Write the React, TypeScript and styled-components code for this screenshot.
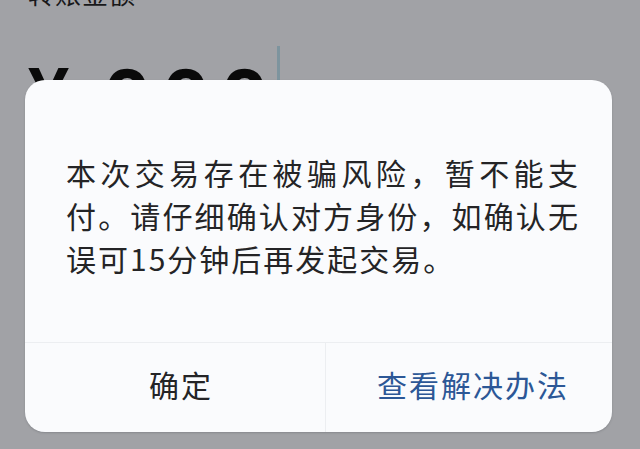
import styled, { createGlobalStyle } from "styled-components";

const GlobalStyle = createGlobalStyle`
  html, body {
    margin: 0;
    padding: 0;
  }
  body {
    font-family: "Noto Sans CJK SC", "Noto Sans", sans-serif;
  }
`;

const Screen = styled.div`
  position: relative;
  width: 640px;
  height: 449px;
  overflow: hidden;
  background: #a1a2a6;
`;

const TransferForm = styled.div`
  display: flex;
  flex-direction: column;
  padding-left: 28px;
`;

const FieldLabel = styled.div`
  margin-top: -22px;
  font-size: 26px;
  line-height: 30px;
  color: #18181a;
  letter-spacing: 1px;
`;

const AmountRow = styled.div`
  display: flex;
  align-items: flex-start;
  margin-top: 40px;
  height: 120px;
`;

const Currency = styled.span`
  font-family: "Liberation Sans", Arial, sans-serif;
  font-weight: 700;
  font-size: 74px;
  line-height: 100px;
  margin-top: -4px;
  color: #0a0a0a;
  margin-right: 34px;
`;

const Digits = styled.span`
  font-family: "Liberation Sans", Arial, sans-serif;
  font-weight: 700;
  font-size: 86px;
  line-height: 100px;
  letter-spacing: 11px;
  color: #0a0a0a;
`;

const Caret = styled.span`
  width: 3px;
  height: 90px;
  margin-top: -2px;
  margin-left: -3px;
  background: #7d949e;
`;

const Overlay = styled.div`
  position: absolute;
  inset: 0;
  display: flex;
  padding: 80px 28px 17px 25px;
`;

const Dialog = styled.div`
  flex: 1;
  display: flex;
  flex-direction: column;
  background: #fafbfd;
  border-radius: 20px;
  box-shadow: 0 1px 2px rgba(60, 62, 70, 0.25);
  overflow: hidden;
`;

const Body = styled.div`
  flex: 1;
  padding: 71px 0 0 41px;
`;

const Message = styled.p`
  margin: 0;
  width: 514px;
  font-size: 30px;
  line-height: 43px;
  letter-spacing: 2px;
  color: #242426;
  text-align: justify;
  line-break: strict;
`;

const Actions = styled.div`
  display: grid;
  grid-template-columns: 300px 1fr;
  height: 89px;
  border-top: 1px solid #eceef1;
`;

const ActionButton = styled.button<{ $primary?: boolean }>`
  display: flex;
  align-items: center;
  justify-content: center;
  padding: 0 0 8px ${(p) => (p.$primary ? "8px" : "12px")};
  border: none;
  border-left: ${(p) => (p.$primary ? "1px solid #eceef1" : "none")};
  background: transparent;
  font-family: "Noto Sans CJK SC", "Noto Sans", sans-serif;
  font-size: 30px;
  letter-spacing: 2px;
  color: ${(p) => (p.$primary ? "#2c5796" : "#242426")};
  cursor: pointer;
`;

export default function App() {
  return (
    <>
      <GlobalStyle />
      <Screen>
        <TransferForm>
          <FieldLabel>转账金额</FieldLabel>
          <AmountRow>
            <Currency>¥</Currency>
            <Digits>000</Digits>
            <Caret />
          </AmountRow>
        </TransferForm>
        <Overlay>
          <Dialog>
            <Body>
              <Message>
                本次交易存在被骗风险，暂不能支付。请仔细确认对方身份，如确认无误可15分钟后再发起交易。
              </Message>
            </Body>
            <Actions>
              <ActionButton>确定</ActionButton>
              <ActionButton $primary>查看解决办法</ActionButton>
            </Actions>
          </Dialog>
        </Overlay>
      </Screen>
    </>
  );
}
